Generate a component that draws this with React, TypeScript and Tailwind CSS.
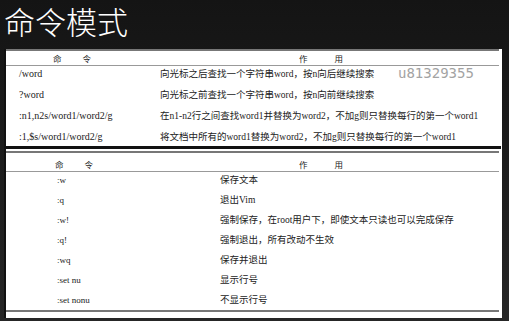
const top = [
  ['/word', '向光标之后查找一个字符串word，按n向后继续搜索'],
  ['?word', '向光标之前查找一个字符串word，按n向前继续搜索'],
  [':n1,n2s/word1/word2/g', '在n1-n2行之间查找word1并替换为word2，不加g则只替换每行的第一个word1'],
  [':1,$s/word1/word2/g', '将文档中所有的word1替换为word2，不加g则只替换每行的第一个word1'],
];

const bottom = [
  [':w', '保存文本'],
  [':q', '退出Vim'],
  [':w!', '强制保存，在root用户下，即使文本只读也可以完成保存'],
  [':q!', '强制退出，所有改动不生效'],
  [':wq', '保存并退出'],
  [':set nu', '显示行号'],
  [':set nonu', '不显示行号'],
];

const serif = "font-['Liberation_Serif','Noto_Sans_CJK_SC',serif]";

const App = () => {
  return (
    <div className="h-[321px] w-[509px] overflow-hidden bg-gradient-to-b from-[#141414] to-[#262626] font-['Noto_Sans_CJK_SC',sans-serif]">
      <div className="h-[47px] pl-[4px] text-[31px] leading-[42px] text-white font-light">
        命令模式
      </div>
      <div className="ml-[4px] w-[498px] h-[269px] bg-white border-l-2 border-[#111] text-[#222]">
        <div className="mt-[2px] h-[2px] bg-[#777] mr-[3px]" />
        <div className="grid grid-cols-[154px_1fr] h-[15px] items-center text-[8.5px] leading-[15px] border-b border-[#999] mr-[3px]">
          <div className="pl-[47px] tracking-[21px]">命令</div>
          <div className="pl-[139px] tracking-[27px]">作用</div>
        </div>
        {top.map(([c, d], i) => (
          <div
            key={c}
            className={`grid grid-cols-[154px_1fr] leading-[16px] ${i === 3 ? 'h-[17px]' : 'h-[21px]'}`}
          >
            <div className={`pl-[13px] text-[10px] ${serif}`}>{c}</div>
            <div className={`text-[9.5px] ${serif} relative`}>
              {d}
              {i === 0 && (
                <span className="absolute left-[238px] top-[-2px] text-[14px] leading-[18px] text-[#a3a3a3] font-['DejaVu_Sans_Mono',monospace]">
                  u81329355
                </span>
              )}
            </div>
          </div>
        ))}
        <div className="h-[3px] bg-[#111] mr-[1px]" />
        <div className="mt-[2px] h-[2px] bg-[#777] mr-[3px]" />
        <div className="grid grid-cols-[214px_1fr] h-[19px] items-center text-[8.5px] leading-[19px] pt-[2px] border-b border-[#999] mr-[3px]">
          <div className="pl-[49px] tracking-[21px]">命令</div>
          <div className="pl-[79px] tracking-[27px]">作用</div>
        </div>
        {bottom.map(([c, d], i) => (
          <div
            key={c}
            className={`grid grid-cols-[214px_1fr] leading-[16px] ${i === 6 ? 'h-[18px]' : 'h-[20px]'}`}
          >
            <div className={`pl-[51px] text-[9px] ${serif}`}>{c}</div>
            <div className={`text-[9.5px] ${serif}`}>{d}</div>
          </div>
        ))}
        <div className="h-[2px] bg-[#777] mr-[3px]" />
      </div>
    </div>
  );
};

export default App;
